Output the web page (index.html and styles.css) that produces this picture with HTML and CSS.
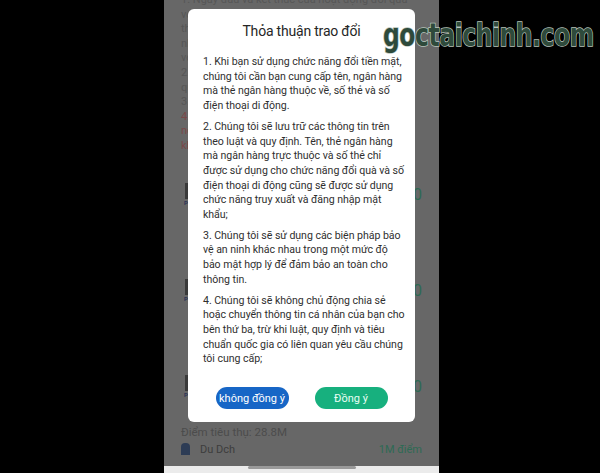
FILE: index.html
```html
<!DOCTYPE html>
<html lang="vi">
<head>
<meta charset="utf-8">
<title>Thỏa thuận trao đổi</title>
<link rel="stylesheet" href="styles.css">
</head>
<body>
<div class="stage">
  <div class="phone">
    <div class="page">
      <div class="rules">
        <p>1. Ngày đầu và kết thúc của hoạt động đổi quà</p>
        <p>với các điều kiện được áp dụng</p>
        <p>theo quy định của chương trình</p>
        <p>nhận thưởng khi đổi quà thành công</p>
        <p>với các giới hạn mỗi ngày</p>
        <p>2. Mỗi người dùng chỉ được đổi</p>
        <p>quà theo quy định của hệ thống</p>
        <p>3. Điểm sẽ được trừ ngay lập tức</p>
        <p class="red">4. Nếu phát hiện gian lận, chúng tôi</p>
        <p class="red">nghiêm cấm và thu hồi phần thưởng</p>
        <p class="red">không báo trước</p>
      </div>
      <div class="cards">
        <div class="card">
          <div class="card-ico"><span class="bar"></span><span class="p">P</span></div>
          <div class="card-val">0</div>
        </div>
        <div class="card">
          <div class="card-ico"><span class="bar"></span><span class="p">P</span></div>
          <div class="card-val">0</div>
        </div>
        <div class="card">
          <div class="card-ico"><span class="bar"></span><span class="p">P</span></div>
          <div class="card-val">0</div>
        </div>
      </div>
      <div class="points">Điểm tiêu thụ: 28.8M</div>
      <div class="next">
        <span class="next-ico"></span>
        <span class="next-name">Du Dch</span>
        <span class="next-val">1M điểm</span>
      </div>
    </div>
    <div class="navbar"><span class="home"></span></div>

    <div class="dialog">
      <h1 class="dialog-title">Thỏa thuận trao đổi</h1>
      <p class="dialog-text">1. Khi bạn sử dụng chức năng đổi tiền mặt,<br>chúng tôi cần bạn cung cấp tên, ngân hàng<br>mà thẻ ngân hàng thuộc về, số thẻ và số<br>điện thoại di động.</p>
      <p class="dialog-text">2. Chúng tôi sẽ lưu trữ các thông tin trên<br>theo luật và quy định. Tên, thẻ ngân hàng<br>mà ngân hàng trực thuộc và số thẻ chỉ<br>được sử dụng cho chức năng đổi quà và số<br>điện thoại di động cũng sẽ được sử dụng<br>chức năng truy xuất và đăng nhập mật<br>khẩu;</p>
      <p class="dialog-text">3. Chúng tôi sẽ sử dụng các biện pháp bảo<br>vệ an ninh khác nhau trong một mức độ<br>bảo mật hợp lý để đảm bảo an toàn cho<br>thông tin.</p>
      <p class="dialog-text">4. Chúng tôi sẽ không chủ động chia sẻ<br>hoặc chuyển thông tin cá nhân của bạn cho<br>bên thứ ba, trừ khi luật, quy định và tiêu<br>chuẩn quốc gia có liên quan yêu cầu chúng<br>tôi cung cấp;</p>
      <div class="dialog-actions">
        <button class="btn btn-decline">không đồng ý</button>
        <button class="btn btn-accept">Đồng ý</button>
      </div>
    </div>
  </div>
  <div class="watermark">goctaichinh.com</div>
</div>
</body>
</html>
```
FILE: styles.css
```css
html, body {
  margin: 0;
  padding: 0;
  background: #000;
}
body {
  width: 600px;
  height: 473px;
  overflow: hidden;
  font-family: Roboto, "Noto Sans", sans-serif;
}
.stage {
  position: relative;
  width: 600px;
  height: 473px;
}
.phone {
  position: relative;
  margin-left: 164px;
  width: 275px;
  height: 473px;
  background: #676767;
  overflow: hidden;
  display: flex;
  flex-direction: column;
}
.page {
  flex: 1;
  padding: 0 0 0 17px;
  overflow: hidden;
}
.rules {
  margin-top: -7px;
}
.rules p {
  margin: 0;
  font-size: 11px;
  line-height: 14.6px;
  color: #565656;
  white-space: nowrap;
}
.rules p.red {
  color: #7a4848;
}
.cards {
  margin-top: -7px;
}
.card {
  display: flex;
  justify-content: space-between;
  align-items: center;
  height: 96px;
  padding-right: 17px;
}
.card-ico {
  display: flex;
  flex-direction: column;
  align-items: center;
  width: 10px;
}
.bar {
  width: 3px;
  height: 16px;
  background: #3a3a3a;
}
.p {
  font-size: 6px;
  font-weight: bold;
  color: #2c3356;
}
.card-val {
  font-size: 16px;
  color: #2e6a54;
}
.points {
  margin-top: -10px;
  font-size: 11.5px;
  color: #4c4c4c;
}
.next {
  display: flex;
  align-items: center;
  gap: 10px;
  margin-top: 4px;
  padding-right: 17px;
}
.next-ico {
  width: 9px;
  height: 12px;
  border-radius: 4px 4px 0 0;
  background: #2d3c55;
}
.next-name {
  flex: 1;
  font-size: 11px;
  color: #3d3d3d;
}
.next-val {
  font-size: 11px;
  color: #2e6a54;
}
.navbar {
  height: 7px;
  background: #ebebeb;
  display: flex;
  justify-content: center;
}
.home {
  width: 108px;
  height: 3px;
  background: #9a9a9a;
  border-radius: 2px;
}
.dialog {
  position: absolute;
  left: 24px;
  top: 9px;
  width: 227px;
  height: 413px;
  box-sizing: border-box;
  background: #fff;
  border-radius: 6px;
  padding: 12px 8px 13px 15px;
  display: flex;
  flex-direction: column;
}
.dialog-title {
  margin: 0 7px 14px 0;
  text-align: center;
  font-size: 14px;
  line-height: 20px;
  letter-spacing: -0.2px;
  font-weight: normal;
  color: #262626;
}
.dialog-text {
  margin: 0 0 6px 0;
  font-size: 10.6px;
  line-height: 14.7px;
  letter-spacing: -0.05px;
  color: #2f2f2f;
  white-space: nowrap;
}
.dialog-actions {
  margin-top: auto;
  margin-right: 7px;
  display: flex;
  justify-content: center;
  gap: 26px;
}
.btn {
  width: 73px;
  height: 22px;
  border: none;
  border-radius: 11px;
  color: #fff;
  font-family: Roboto, "Noto Sans", sans-serif;
  font-size: 11px;
  padding: 0;
}
.btn-decline {
  background: #1766c6;
}
.btn-accept {
  background: #17b07e;
  color: #e8fff4;
}
.watermark {
  position: absolute;
  left: 383px;
  top: 17px;
  font-family: "DejaVu Sans Condensed", "DejaVu Sans", sans-serif;
  font-weight: bold;
  font-size: 26px;
  letter-spacing: -0.4px;
  color: #2e4a3b;
  -webkit-text-stroke: 1.2px #b8c4bb;
  paint-order: stroke fill;
  transform: scaleY(1.2);
  transform-origin: left top;
}
```
